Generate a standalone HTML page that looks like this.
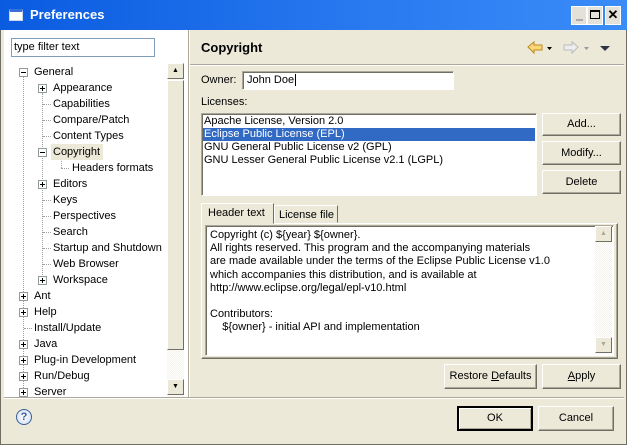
<!DOCTYPE html>
<html><head><style>
*{margin:0;padding:0;box-sizing:border-box}
body{width:627px;height:445px;overflow:hidden;background:#ece9d8;font-family:"Liberation Sans",sans-serif;font-size:11px;color:#000;position:relative}
.a{position:absolute;white-space:nowrap}
.t{position:absolute;white-space:nowrap;margin-top:1px}
.btn{position:absolute;background:#ece9d8;border:1px solid;border-color:#fff #716f64 #716f64 #fff;box-shadow:inset -1px -1px 0 #aca899;text-align:center;font-size:11px}
.sunk{position:absolute;background:#fff;border:1px solid;border-color:#aca899 #fff #fff #aca899;box-shadow:inset 1px 1px 0 #716f64}
.tb{position:absolute;width:16px;height:16px;background:#ece9d8;border:1px solid;border-color:#fff #716f64 #716f64 #fff}
.pm{position:absolute;width:9px;height:9px;border:1px solid #919b9c;background:#fff}
.pm::before{content:"";position:absolute;left:1px;top:3px;width:5px;height:1px;background:#000}
.pm.p::after{content:"";position:absolute;left:3px;top:1px;width:1px;height:5px;background:#000}
.dv{position:absolute;border-left:1px dotted #a0a0a0}
.dh{position:absolute;border-top:1px dotted #a0a0a0;height:0}
.hatch{background:repeating-conic-gradient(#f4f2ea 0 25%,#fff 0 50%) 0 0/2px 2px}
</style></head><body>
<div class="a" style="left:0;top:0;width:627px;height:445px;border:1px solid #716f64;border-top:none"></div>
<div class="a" style="left:0;top:0;width:627px;height:30px;background:linear-gradient(90deg,#0a5be0,#2a7af0 60%,#3a8cf8)"></div>
<div class="a" style="left:9px;top:9px;width:14px;height:12px;background:#fff;border:1px solid #cfd8e8;border-top:3px solid #3b6fd8"></div>
<div class="a" style="left:30px;top:7px;color:#fff;font-weight:bold;font-size:13px">Preferences</div>
<div class="a" style="left:571px;top:6px;width:16px;height:19px;background:#e4e2d8;border:1px solid #fff"><div class="a" style="left:4px;top:12px;width:7px;height:2px;background:#aaa"></div></div>
<div class="a" style="left:587px;top:6px;width:16px;height:19px;background:#e4e2d8;border:1px solid #fff"><div class="a" style="left:2px;top:3px;width:10px;height:9px;border:1px solid #000;border-top-width:2px"></div></div>
<div class="a" style="left:605px;top:6px;width:16px;height:19px;background:#e4e2d8;border:1px solid #fff;font-weight:bold;font-size:13px;line-height:16px;text-align:center">✕</div>

<div class="a" style="left:4px;top:30px;width:184px;height:367px;background:#fff"></div>
<div class="a" style="left:188px;top:30px;width:2px;height:367px;background:#aca899;border-right:1px solid #fff"></div>
<div class="a" style="left:11px;top:38px;width:144px;height:19px;border:1px solid #7f9db9;background:#fff;padding:2px 2px;font-size:11px">type filter text</div>

<div class="dv" style="left:23px;top:77px;height:315px"></div>
<div class="dv" style="left:42px;top:93px;height:188px"></div>
<div class="dv" style="left:61px;top:157px;height:11px"></div>
<div class="dh" style="left:61px;top:168px;width:8px"></div>

<div class="pm" style="left:19px;top:68px"></div><div class="t" style="left:34px;top:65px">General</div>
<div class="pm p" style="left:38px;top:84px"></div><div class="t" style="left:53px;top:81px">Appearance</div>
<div class="dh" style="left:43px;top:104px;width:8px"></div><div class="t" style="left:53px;top:97px">Capabilities</div>
<div class="dh" style="left:43px;top:120px;width:8px"></div><div class="t" style="left:53px;top:113px">Compare/Patch</div>
<div class="dh" style="left:43px;top:136px;width:8px"></div><div class="t" style="left:53px;top:129px">Content Types</div>
<div class="a" style="left:51px;top:144px;width:52px;height:16px;background:#ece9d8"></div>
<div class="pm" style="left:38px;top:148px"></div><div class="t" style="left:53px;top:145px">Copyright</div>
<div class="t" style="left:72px;top:161px">Headers formats</div>
<div class="pm p" style="left:38px;top:180px"></div><div class="t" style="left:53px;top:177px">Editors</div>
<div class="dh" style="left:43px;top:200px;width:8px"></div><div class="t" style="left:53px;top:193px">Keys</div>
<div class="dh" style="left:43px;top:216px;width:8px"></div><div class="t" style="left:53px;top:209px">Perspectives</div>
<div class="dh" style="left:43px;top:232px;width:8px"></div><div class="t" style="left:53px;top:225px">Search</div>
<div class="dh" style="left:43px;top:248px;width:8px"></div><div class="t" style="left:53px;top:241px">Startup and Shutdown</div>
<div class="dh" style="left:43px;top:264px;width:8px"></div><div class="t" style="left:53px;top:257px">Web Browser</div>
<div class="pm p" style="left:38px;top:276px"></div><div class="t" style="left:53px;top:273px">Workspace</div>
<div class="pm p" style="left:19px;top:292px"></div><div class="t" style="left:34px;top:289px">Ant</div>
<div class="pm p" style="left:19px;top:308px"></div><div class="t" style="left:34px;top:305px">Help</div>
<div class="dh" style="left:24px;top:328px;width:8px"></div><div class="t" style="left:34px;top:321px">Install/Update</div>
<div class="pm p" style="left:19px;top:340px"></div><div class="t" style="left:34px;top:337px">Java</div>
<div class="pm p" style="left:19px;top:356px"></div><div class="t" style="left:34px;top:353px">Plug-in Development</div>
<div class="pm p" style="left:19px;top:372px"></div><div class="t" style="left:34px;top:369px">Run/Debug</div>
<div class="a" style="left:4px;top:384px;width:163px;height:13px;overflow:hidden"><div class="pm p" style="left:15px;top:4px"></div><div class="t" style="left:30px;top:1px">Server</div></div>

<div class="a hatch" style="left:167px;top:63px;width:17px;height:334px"></div>
<div class="tb" style="left:167px;top:63px;width:17px;font-size:7px;line-height:14px;text-align:center">▲</div>
<div class="tb" style="left:167px;top:80px;width:17px;height:270px"></div>
<div class="tb" style="left:167px;top:379px;width:17px;font-size:7px;line-height:14px;text-align:center">▼</div>

<div class="a" style="left:201px;top:40px;font-weight:bold;font-size:13px">Copyright</div>
<svg class="a" style="left:527px;top:40px" width="95" height="16">
<path d="M1 7 L7 2 V5 H15 V10 H7 V13 Z" fill="#fcd77a" stroke="#c08a1a"/>
<path d="M20 7 h5 l-2.5 3z" fill="#000"/>
<path d="M51 7 L45 2 V5 H37 V10 H45 V13 Z" fill="#eee" stroke="#bbb"/>
<path d="M57 7 h5 l-2.5 3z" fill="#999"/>
<path d="M73 6 h10 l-5 5z" fill="#333348"/>
</svg>
<div class="a" style="left:190px;top:64px;width:434px;height:2px;border-top:1px solid #aca899;border-bottom:1px solid #fff"></div>

<div class="a" style="left:201px;top:74px">Owner:</div>
<div class="sunk" style="left:242px;top:71px;width:212px;height:19px;padding:2px 4px">John Doe<span style="border-left:1px solid #000;margin-left:1px"></span></div>
<div class="a" style="left:201px;top:96px">Licenses:</div>
<div class="sunk" style="left:201px;top:113px;width:336px;height:83px"></div>
<div class="a" style="left:204px;top:115px;line-height:13px">Apache License, Version 2.0</div>
<div class="a" style="left:203px;top:128px;width:332px;height:13px;background:#316ac5"></div>
<div class="a" style="left:204px;top:128px;line-height:13px;color:#fff">Eclipse Public License (EPL)</div>
<div class="a" style="left:204px;top:141px;line-height:13px">GNU General Public License v2 (GPL)</div>
<div class="a" style="left:204px;top:154px;line-height:13px">GNU Lesser General Public License v2.1 (LGPL)</div>

<div class="btn" style="left:542px;top:113px;width:79px;height:23px;line-height:21px">Add...</div>
<div class="btn" style="left:542px;top:141px;width:79px;height:24px;line-height:22px">Modify...</div>
<div class="btn" style="left:542px;top:170px;width:79px;height:24px;line-height:22px">Delete</div>

<div class="a" style="left:201px;top:223px;width:417px;height:136px;border:1px solid;border-color:#fff #716f64 #716f64 #fff;box-shadow:inset -1px -1px 0 #aca899"></div>
<div class="a" style="left:201px;top:203px;width:73px;height:21px;background:#ece9d8;border:1px solid;border-color:#fff #716f64 transparent #fff;padding:3px 0 0 6px">Header text</div>
<div class="a" style="left:274px;top:205px;width:64px;height:18px;border:1px solid;border-color:#fff #716f64 transparent #fff;padding:3px 0 0 4px">License file</div>
<div class="sunk" style="left:205px;top:225px;width:409px;height:131px"></div>
<div class="a" style="left:210px;top:228px;line-height:13.2px;margin-top:1px">Copyright (c) ${year} ${owner}.<br>All rights reserved. This program and the accompanying materials<br>are made available under the terms of the Eclipse Public License v1.0<br>which accompanies this distribution, and is available at<br>http://www.eclipse.org/legal/epl-v10.html<br><br>Contributors:<br>&nbsp;&nbsp;&nbsp;&nbsp;${owner} - initial API and implementation</div>
<div class="a hatch" style="left:595px;top:226px;width:17px;height:128px"></div>
<div class="tb" style="left:595px;top:226px;width:17px;font-size:7px;line-height:14px;text-align:center;color:#aca899">▲</div>
<div class="tb" style="left:595px;top:337px;width:17px;font-size:7px;line-height:14px;text-align:center;color:#aca899">▼</div>

<div class="btn" style="left:444px;top:364px;width:93px;height:25px;line-height:23px">Restore <u>D</u>efaults</div>
<div class="btn" style="left:542px;top:364px;width:79px;height:25px;line-height:23px"><u>A</u>pply</div>

<div class="a" style="left:4px;top:397px;width:620px;height:2px;border-top:1px solid #aca899;border-bottom:1px solid #fff"></div>
<div class="a" style="left:16px;top:409px;width:16px;height:16px;border-radius:50%;border:1px solid #3a5f9a;background:radial-gradient(#fff,#cfdcf0);color:#3a5f9a;font-weight:bold;font-size:11px;line-height:14px;text-align:center">?</div>
<div class="btn" style="left:457px;top:406px;width:76px;height:25px;line-height:21px;border:2px solid #000;box-shadow:inset 1px 1px 0 #fff,inset -1px -1px 0 #aca899">OK</div>
<div class="btn" style="left:538px;top:406px;width:76px;height:25px;line-height:23px">Cancel</div>
</body></html>
